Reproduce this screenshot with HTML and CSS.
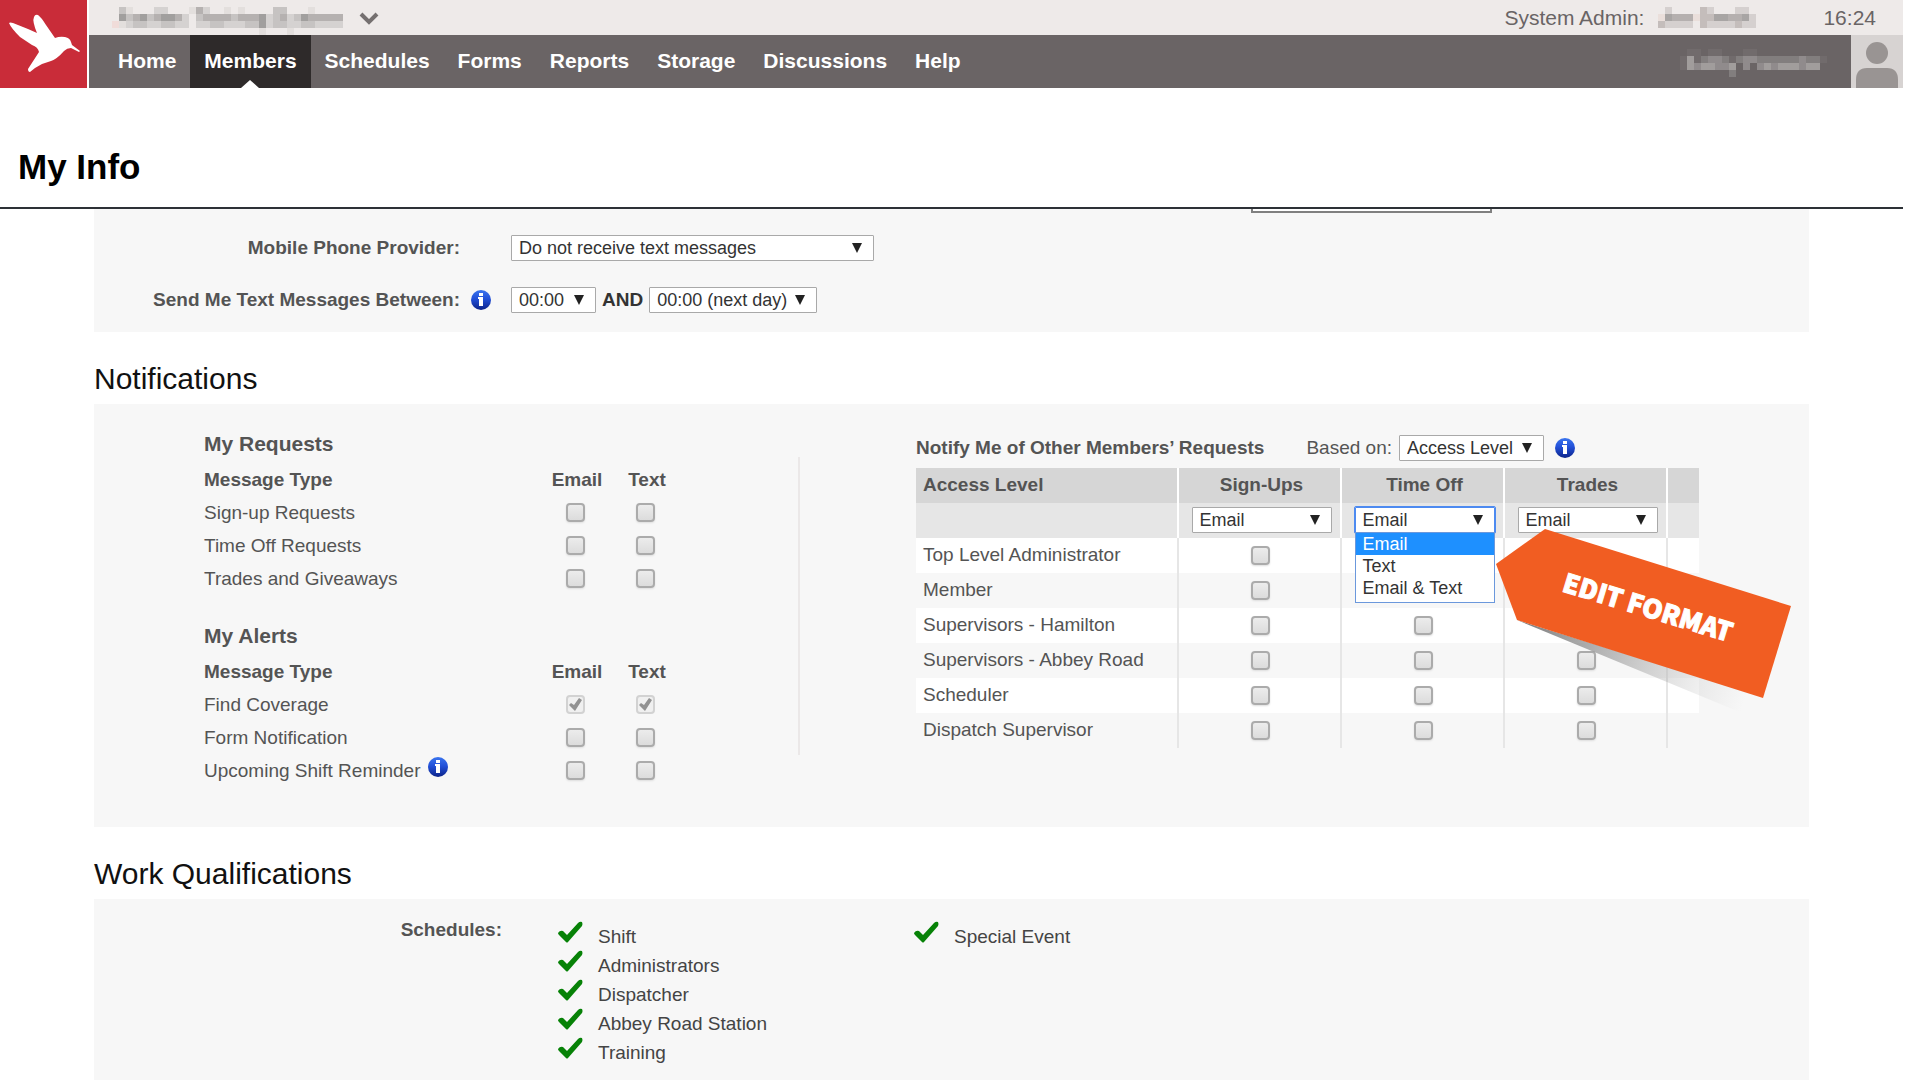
FILE: index.html
```html
<!DOCTYPE html>
<html lang="en">
<head>
<meta charset="utf-8">
<meta name="viewport" content="width=device-width, initial-scale=1">
<title>My Info</title>
<link rel="stylesheet" href="styles.css">
</head>
<body>
<header class="site-header">
  <a class="logo" href="#">
    <svg width="87" height="88" viewBox="0 0 87 88" aria-hidden="true"><path fill="#fff" d="M9 23q1-1 4 0l15 6 9 4q-5-12-3-16 1-3 4-2 3 2 8 10l9 13q5-2 10-1 5 1 6 5l1 3 8 6-1 1-8-4q-4 0-7 3-7 8-13 10l-9 3-7 4-5 4q-2 0-2-3l11-17q-1-5-7-7l-12-8Q11 28 9 23z"/></svg>
  </a>
  <div class="bars">
    <div class="top-bar">
      <svg class="system-name" width="238" height="28" viewBox="0 0 34 4" shape-rendering="crispEdges" aria-hidden="true">
        <path fill="#e3dfdd" d="M2 0h1v1h-1zM11 0h1v1h-1zM16 0h1v1h-1zM18 0h1v1h-1zM28 0h1v1h-1zM1 2h1v1h-1zM21 3h1v1h-1zM25 3h1v1h-1z"/>
        <path fill="#d5d2d1" d="M6 0h2v1h-2zM13 0h1v1h-1zM10 1h1v1h-1zM22 1h1v1h-1zM25 1h1v1h-1zM2 2h1v1h-1zM5 2h2v1h-2zM9 2h2v1h-2zM12 2h2v1h-2zM16 2h3v1h-3zM22 2h1v1h-1zM25 2h2v1h-2zM29 2h4v1h-4z"/>
        <path fill="#c6c3c2" d="M1 0h1v1h-1zM23 0h2v1h-2zM2 1h1v1h-1zM5 1h1v1h-1zM12 1h1v1h-1zM17 1h1v1h-1zM23 1h1v1h-1zM26 1h1v1h-1zM3 2h2v1h-2zM7 2h2v1h-2zM14 2h2v1h-2zM19 2h2v1h-2zM23 2h2v1h-2zM27 2h2v1h-2z"/>
        <path fill="#b5b1b0" d="M12 0h1v1h-1zM3 1h1v1h-1zM6 1h1v1h-1zM9 1h1v1h-1zM13 1h4v1h-4zM18 1h3v1h-3zM24 1h1v1h-1zM28 1h5v1h-5z"/>
        <path fill="#a19f9e" d="M1 1h1v1h-1zM4 1h1v1h-1zM7 1h2v1h-2zM21 1h1v1h-1zM27 1h1v1h-1zM21 2h1v1h-1z"/>
        <path fill="#f0dcd9" d="M0 2h1v1h-1z"/>
      </svg>
      <button class="switcher" type="button"><svg width="22" height="16" viewBox="0 0 22 16" aria-hidden="true"><path d="M3 3l8 8 8-8" fill="none" stroke="#757070" stroke-width="4"/></svg></button>
      <span class="admin">System Admin:</span>
      <svg class="admin-name" width="98" height="21" viewBox="0 0 14 3" shape-rendering="crispEdges" aria-hidden="true">
        <path fill="#d5d0cf" d="M1 0h1v1h-1zM7 0h1v1h-1zM11 0h2v1h-2zM13 1h1v1h-1zM1 2h4v1h-4zM7 2h4v1h-4zM12 2h2v1h-2z"/>
        <path fill="#c4bdbb" d="M6 0h1v3h-1zM7 1h1v1h-1zM0 2h1v1h-1zM11 2h1v1h-1z"/>
        <path fill="#b5b0af" d="M2 1h3v1h-3zM10 1h2v1h-2z"/>
        <path fill="#a8a5a4" d="M1 1h1v1h-1zM8 1h2v1h-2zM12 1h1v1h-1z"/>
        <path fill="#eadfdb" d="M0 1h1v1h-1zM5 1h1v1h-1z"/>
      </svg>
      <time class="clock">16:24</time>
    </div>
    <div class="nav-bar">
      <nav class="nav">
        <a href="#">Home</a>
        <a class="current" href="#">Members</a>
        <a href="#">Schedules</a>
        <a href="#">Forms</a>
        <a href="#">Reports</a>
        <a href="#">Storage</a>
        <a href="#">Discussions</a>
        <a href="#">Help</a>
      </nav>
      <svg class="user-name" width="147" height="28" viewBox="0 0 21 4" shape-rendering="crispEdges" aria-hidden="true">
        <path fill="#716b6c" d="M1 0h2v1h-2zM4 0h2v1h-2zM9 0h2v1h-2zM0 1h1v2h-1zM2 1h1v1h-1zM7 1h1v1h-1zM20 1h1v1h-1z"/>
        <path fill="#827e7e" d="M3 1h1v1h-1zM6 1h1v1h-1zM8 1h1v1h-1zM11 1h6v1h-6zM18 1h2v1h-2zM7 3h1v1h-1z"/>
        <path fill="#908b8c" d="M4 1h2v1h-2zM9 1h2v1h-2zM17 1h1v1h-1zM2 2h1v1h-1zM5 2h2v1h-2zM9 2h1v1h-1zM11 2h1v1h-1zM13 2h1v1h-1zM17 2h1v1h-1z"/>
        <path fill="#a19d9c" d="M1 1h1v2h-1zM3 2h2v1h-2zM7 2h1v1h-1zM12 2h1v1h-1zM14 2h3v1h-3zM18 2h2v1h-2z"/>
      </svg>
      <a class="avatar" href="#"><svg width="52" height="53" viewBox="0 0 52 53" aria-hidden="true"><circle cx="26" cy="18" r="11" fill="#999493"/><path fill="#999493" d="M5 53V45Q5 33 16 33H36Q47 33 47 45V53z"/></svg></a>
    </div>
  </div>
</header>

<h1 class="page-title">My Info</h1>

<main class="content">
  <section class="panel contact">
    <input class="cut-off" type="text" aria-labelledby="provider-label">
    <div class="field">
      <label id="provider-label" for="provider">Mobile Phone Provider:</label>
      <span></span>
      <div class="controls"><select id="provider" class="wide"><option>Do not receive text messages</option></select></div>
    </div>
    <div class="field">
      <label for="from">Send Me Text Messages Between:</label>
      <svg class="info" width="20" height="20"><use href="#info-icon"/></svg>
      <div class="controls">
        <select id="from" class="from"><option>00:00</option></select>
        <label class="and" for="to">AND</label>
        <select id="to" class="to"><option>00:00 (next day)</option></select>
      </div>
    </div>
  </section>

  <h2 class="section-title">Notifications</h2>
  <section class="panel notifications">
    <div class="own">
      <table class="messages">
        <caption>My Requests</caption>
        <thead><tr><th>Message Type</th><th id="re">Email</th><th id="rt">Text</th></tr></thead>
        <tbody>
          <tr><td id="r1">Sign-up Requests</td><td><input type="checkbox" aria-labelledby="r1 re"></td><td><input type="checkbox" aria-labelledby="r1 rt"></td></tr>
          <tr><td id="r2">Time Off Requests</td><td><input type="checkbox" aria-labelledby="r2 re"></td><td><input type="checkbox" aria-labelledby="r2 rt"></td></tr>
          <tr><td id="r3">Trades and Giveaways</td><td><input type="checkbox" aria-labelledby="r3 re"></td><td><input type="checkbox" aria-labelledby="r3 rt"></td></tr>
        </tbody>
      </table>
      <table class="messages">
        <caption>My Alerts</caption>
        <thead><tr><th>Message Type</th><th id="ae">Email</th><th id="at">Text</th></tr></thead>
        <tbody>
          <tr><td id="a1">Find Coverage</td><td><input type="checkbox" checked disabled aria-labelledby="a1 ae"></td><td><input type="checkbox" checked disabled aria-labelledby="a1 at"></td></tr>
          <tr><td id="a2">Form Notification</td><td><input type="checkbox" aria-labelledby="a2 ae"></td><td><input type="checkbox" aria-labelledby="a2 at"></td></tr>
          <tr><td id="a3">Upcoming Shift Reminder <svg class="info" width="20" height="20"><use href="#info-icon"/></svg></td><td><input type="checkbox" aria-labelledby="a3 ae"></td><td><input type="checkbox" aria-labelledby="a3 at"></td></tr>
        </tbody>
      </table>
    </div>
    <div class="divider"></div>
    <div class="others">
      <div class="others-head">
        <h3>Notify Me of Other Members’ Requests</h3>
        <label for="based">Based on:</label>
        <select id="based" class="based"><option>Access Level</option></select>
        <svg class="info" width="20" height="20"><use href="#info-icon"/></svg>
      </div>
      <table class="levels">
        <colgroup><col class="c-level"><col class="c-kind"><col class="c-kind"><col class="c-kind"><col class="c-end"></colgroup>
        <thead>
          <tr><th>Access Level</th><th id="su">Sign-Ups</th><th id="to-h">Time Off</th><th id="tr">Trades</th><th></th></tr>
          <tr class="formats">
            <td></td>
            <td><select aria-labelledby="su"><option>Email</option></select></td>
            <td>
              <div class="open-select">
                <select class="focused" aria-labelledby="to-h"><option>Email</option><option>Text</option><option>Email &amp; Text</option></select>
                <ul class="menu" role="listbox" aria-labelledby="to-h">
                  <li role="option" aria-selected="true">Email</li>
                  <li role="option">Text</li>
                  <li role="option">Email &amp; Text</li>
                </ul>
              </div>
            </td>
            <td><select aria-labelledby="tr"><option>Email</option></select></td>
            <td></td>
          </tr>
        </thead>
        <tbody>
          <tr><td id="l1">Top Level Administrator</td><td><input type="checkbox" aria-labelledby="l1 su"></td><td><input type="checkbox" aria-labelledby="l1 to-h"></td><td><input type="checkbox" aria-labelledby="l1 tr"></td><td></td></tr>
          <tr><td id="l2">Member</td><td><input type="checkbox" aria-labelledby="l2 su"></td><td><input type="checkbox" aria-labelledby="l2 to-h"></td><td><input type="checkbox" aria-labelledby="l2 tr"></td><td></td></tr>
          <tr><td id="l3">Supervisors - Hamilton</td><td><input type="checkbox" aria-labelledby="l3 su"></td><td><input type="checkbox" aria-labelledby="l3 to-h"></td><td><input type="checkbox" aria-labelledby="l3 tr"></td><td></td></tr>
          <tr><td id="l4">Supervisors - Abbey Road</td><td><input type="checkbox" aria-labelledby="l4 su"></td><td><input type="checkbox" aria-labelledby="l4 to-h"></td><td><input type="checkbox" aria-labelledby="l4 tr"></td><td></td></tr>
          <tr><td id="l5">Scheduler</td><td><input type="checkbox" aria-labelledby="l5 su"></td><td><input type="checkbox" aria-labelledby="l5 to-h"></td><td><input type="checkbox" aria-labelledby="l5 tr"></td><td></td></tr>
          <tr><td id="l6">Dispatch Supervisor</td><td><input type="checkbox" aria-labelledby="l6 su"></td><td><input type="checkbox" aria-labelledby="l6 to-h"></td><td><input type="checkbox" aria-labelledby="l6 tr"></td><td></td></tr>
        </tbody>
      </table>
      <svg class="callout" width="300" height="190" viewBox="0 0 300 190">
        <defs><linearGradient id="shade" gradientUnits="userSpaceOnUse" x1="21" y1="92" x2="248" y2="174"><stop offset="0" stop-color="#555" stop-opacity=".8"/><stop offset=".45" stop-color="#888" stop-opacity=".5"/><stop offset="1" stop-color="#bbb" stop-opacity="0"/></linearGradient></defs>
        <path fill="url(#shade)" d="M21 91L246 184 262 166z"/>
        <path fill="#f15d22" d="M0 35L49 0 295 77 267 169 21 91z"/>
        <text class="callout-text" x="152" y="88" text-anchor="middle" transform="rotate(17 152 78)">EDIT FORMAT</text>
      </svg>
    </div>
  </section>

  <h2 class="section-title">Work Qualifications</h2>
  <section class="panel qualifications">
    <h3>Schedules:</h3>
    <ul>
      <li><svg width="25" height="22"><use href="#tick-icon"/></svg>Shift</li>
      <li><svg width="25" height="22"><use href="#tick-icon"/></svg>Administrators</li>
      <li><svg width="25" height="22"><use href="#tick-icon"/></svg>Dispatcher</li>
      <li><svg width="25" height="22"><use href="#tick-icon"/></svg>Abbey Road Station</li>
      <li><svg width="25" height="22"><use href="#tick-icon"/></svg>Training</li>
    </ul>
    <ul>
      <li><svg width="25" height="22"><use href="#tick-icon"/></svg>Special Event</li>
    </ul>
  </section>
</main>

<svg class="symbols" width="0" height="0" aria-hidden="true">
  <defs>
    <linearGradient id="info-fill" x1="0" y1="0" x2="0" y2="1"><stop offset="0" stop-color="#3a74ee"/><stop offset=".45" stop-color="#2250d8"/><stop offset="1" stop-color="#0c2389"/></linearGradient>
    <symbol id="info-icon" viewBox="0 0 20 20">
      <circle cx="10" cy="10" r="10" fill="url(#info-fill)"/>
      <path fill="#fff" d="M8 3h4v3H8zM7 7h5v9H8V9H7z"/>
    </symbol>
    <symbol id="tick-icon" viewBox="0 0 25 22">
      <path fill="#078207" d="M0 12Q2 9 5 10L9 14 20 2Q22 0 24 1 25 3 24 5L10 21Q9 22 8 21L1 14Q0 13 0 12z"/>
    </symbol>
  </defs>
</svg>
</body>
</html>
```
FILE: styles.css
```css
* { box-sizing: border-box; }

body {
  margin: 0;
  padding-right: 17px;
  min-height: 100vh;
  display: flex;
  flex-direction: column;
  background: #fff;
  color: #545454;
  font: 19px/30px "Liberation Sans", Arial, sans-serif;
}

h1, h2, h3, ul { margin: 0; padding: 0; }
ul { list-style: none; }
.symbols { position: absolute; }

/* Header */
.site-header { display: flex; gap: 2px; }
.logo { display: block; height: 88px; background: #c92c39; }
.logo svg, .avatar svg { display: block; }
.bars { flex: 1; }

.top-bar {
  display: flex;
  align-items: flex-start;
  height: 35px;
  padding: 0 27px 0 23px;
  background: #eeeae9;
  color: #696465;
  font-size: 21px;
  line-height: 35px;
}
.system-name, .admin-name { margin-top: 7px; }
.switcher {
  margin: 11px auto 0 8px;
  padding: 0;
  border: 0;
  background: none;
  line-height: 0;
}
.admin-name { margin-left: 14px; }
.clock { margin-left: 67px; }

.nav-bar {
  display: flex;
  align-items: center;
  height: 53px;
  background: #6a6465;
}
.nav { display: flex; flex: 1; padding-left: 15px; }
.nav a {
  padding: 0 14px 2px;
  color: #fff;
  font-size: 21px;
  font-weight: bold;
  line-height: 51px;
  text-decoration: none;
}
.nav .current { position: relative; background: #2e2a2a; }
.nav .current::after {
  content: "";
  position: absolute;
  left: 50%;
  bottom: 0;
  margin-left: -9px;
  border: 9px solid transparent;
  border-top: 0;
  border-bottom: 8px solid #fff;
}
.user-name { margin: 3px 24px 0 0; }
.avatar { background: #d7d3d2; }

.page-title {
  padding: 58px 18px 19px;
  border-bottom: 2px solid #2d3136;
  color: #000;
  font-size: 35px;
  line-height: 42px;
}

/* Panels */
.content {
  flex: 1;
  display: flex;
  flex-direction: column;
  padding: 0 94px;
}
.panel { background: #f7f7f7; }
.section-title {
  padding: 30px 0 8px;
  color: #111;
  font-size: 30px;
  font-weight: normal;
  line-height: 34px;
}

/* Form controls */
select {
  appearance: none;
  display: block;
  height: 26px;
  margin: 0;
  padding: 0 7px;
  border: 1px solid #a9a9a9;
  border-radius: 1px;
  background: #fff url("data:image/svg+xml,%3Csvg xmlns='http://www.w3.org/2000/svg' width='10' height='10'%3E%3Cpath d='M0 0h10L5 10z' fill='%23222'/%3E%3C/svg%3E") no-repeat right 11px top 7px;
  color: #333;
  font: 18px "Liberation Sans", Arial, sans-serif;
}
.wide { width: 363px; }
.from { width: 85px; }
.to { width: 168px; }
.based { width: 145px; }

input[type="checkbox"] {
  appearance: none;
  display: block;
  width: 19px;
  height: 19px;
  margin: 0 auto;
  border: 2px solid #ababab;
  border-radius: 4px;
  background: linear-gradient(#ececec, #dcdcdc);
  box-shadow: 0 1px 2px #ddd;
}
input[type="checkbox"]:checked {
  border-color: #d2d2d2;
  background: url("data:image/svg+xml,%3Csvg xmlns='http://www.w3.org/2000/svg' width='15' height='15'%3E%3Cpath d='M1 8l2-2 3 2 5-7 3 2-7 11z' fill='%23929292'/%3E%3C/svg%3E") center no-repeat, #f0f0f0;
  box-shadow: none;
}

/* Contact fields */
.contact {
  display: flex;
  flex-direction: column;
  gap: 26px;
  padding-bottom: 21px;
  overflow: hidden;
}
.cut-off {
  width: 241px;
  height: 30px;
  margin: -26px 0 -6px 1157px;
  border: 2px solid #808080;
  background: #fff;
}
.field {
  display: grid;
  grid-template-columns: 366px 51px 1fr;
  align-items: center;
  height: 26px;
}
.field label { font-weight: bold; text-align: right; }
.field .info { margin-left: 11px; }
.controls { display: flex; align-items: center; gap: 6px; }
.field .and { color: #333; }

/* Notifications */
.notifications { display: flex; padding: 20px 0 40px 110px; }
.own { display: grid; gap: 21px; }
.messages { width: 476px; border-spacing: 0; }
.messages caption {
  font-size: 21px;
  font-weight: bold;
  line-height: 40px;
  text-align: left;
}
.messages th, .messages td { padding: 0; text-align: center; width: 70px; }
.messages th { height: 32px; padding-left: 4px; }
.messages td { height: 33px; line-height: 33px; }
.messages th:first-child, .messages td:first-child { width: auto; padding: 0; text-align: left; }
.messages .info { margin-left: 2px; vertical-align: baseline; }
.divider {
  width: 2px;
  margin: 33px 116px 32px 118px;
  background: #ebe8e8;
}

.others { position: relative; }
.others-head { display: flex; align-items: center; height: 44px; padding-top: 4px; }
.others-head h3 { margin-right: 42px; font-size: 19px; }
.others-head .based { margin: 0 11px 0 7px; }

.levels {
  width: 783px;
  border-spacing: 0;
  table-layout: fixed;
}
.c-level { width: 263px; }
.c-kind { width: 163px; }
.c-end { width: 31px; }
.levels th, .levels td {
  height: 35px;
  padding: 0 0 0 2px;
  border-right: 2px solid #e6e6e6;
  text-align: center;
}
.levels th, .levels .formats td { padding: 0 0 2px 4px; }
.levels th { border-color: #fff; background: #d6d6d6; }
.levels .formats td { border-color: #fff; background: #e6e6e6; }
.levels tbody tr:nth-child(odd) { background: #fff; }
.levels th:first-child, .levels td:first-child { padding-left: 7px; text-align: left; }
.levels th:last-child, .levels td:last-child { border-right: 0; }
.levels tbody td { padding-bottom: 1px; }
.levels select { width: 140px; margin: 0 auto; }
.open-select { position: relative; width: 140px; margin: 0 auto; }
.levels .focused { border-color: #4d8af0; outline: 1px solid #4d8af0; }
.menu {
  position: absolute;
  z-index: 1;
  top: 25px;
  left: 0;
  right: 0;
  padding-bottom: 3px;
  border: 1px solid #6b98dc;
  background: #fff;
  color: #333;
  font-size: 18px;
  line-height: 22px;
  text-align: left;
}
.menu li { padding: 0 7px; }
.menu [aria-selected] { background: #1e90ff; color: #fff; }

.callout {
  position: absolute;
  z-index: 2;
  left: 580px;
  top: 105px;
}
.callout-text {
  fill: #fff;
  stroke: #fff;
  stroke-width: 1px;
  font: 900 26px "Noto Sans CJK SC", "Noto Sans", sans-serif;
}

/* Qualifications */
.qualifications {
  flex: 1;
  display: grid;
  grid-template-columns: 408px 356px 1fr;
  align-content: start;
  padding-top: 16px;
}
.qualifications h3 { font-size: 19px; text-align: right; }
.qualifications ul { padding-top: 6px; margin-left: 56px; margin-right: -56px; }
.qualifications li {
  display: flex;
  gap: 15px;
  height: 29px;
  color: #444;
  line-height: 32px;
}
```
